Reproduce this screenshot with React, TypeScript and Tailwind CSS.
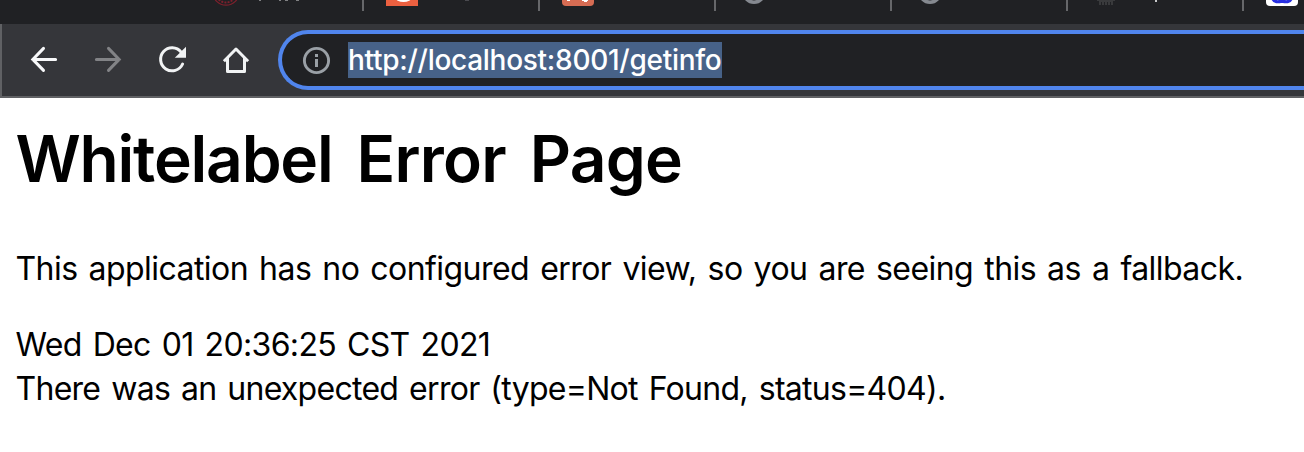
import React from "react";

function Tab({ children }: { children: React.ReactNode }) {
  return (
    <div className="flex h-[11px] w-44 shrink-0 border-r-2 border-[#66676a] pl-[22px]">
      <svg className="h-[11px] w-[110px] shrink-0" viewBox="0 0 110 11">
        {children}
      </svg>
    </div>
  );
}

function Globe() {
  return <circle cx="16" cy="-8" r="10.2" fill="none" stroke="#858990" strokeWidth="3.6" />;
}

function TabStrip() {
  return (
    <div className="flex h-6 overflow-hidden bg-[#202124] pl-[188px]">
      <Tab>
        <g fill="none" stroke="#7d202c">
          <circle cx="16" cy="-8" r="13.2" strokeWidth="1.2" />
          <circle cx="16" cy="-8" r="10.5" strokeWidth="1.8" strokeDasharray="2 1.2" />
        </g>
        <path d="M49 0h2M69 0h2M75 0h3M86 0h3" stroke="#a0a1a3" strokeWidth="1.6" />
      </Tab>
      <Tab>
        <path d="M0 0h32v6H0z" fill="#eb6040" />
        <ellipse cx="17.5" cy="-2.5" rx="8" ry="4.6" fill="#fff" />
        <path d="M79 0h4" stroke="#55565a" strokeWidth="1.6" />
      </Tab>
      <Tab>
        <rect x="0" y="-26" width="32" height="32" rx="4" fill="#d66c53" />
        <path d="M5 0h3v1H5zM20 0h6v1h-1v1h-3V1h-2z" fill="#fff" />
      </Tab>
      <Tab>
        <Globe />
      </Tab>
      <Tab>
        <Globe />
      </Tab>
      <Tab>
        <path d="M7 0h18v1h-2v4h-2V2h-1v3h-2V2h-1v3h-2V2h-1v3h-2V2h-1v3H9V1H7z" fill="#393a3c" />
        <path d="M66 0v2" stroke="#c7c8ca" strokeWidth="2" />
      </Tab>
      <Tab>
        <rect x="0" y="-26" width="32" height="32" rx="4" fill="#fff" />
        <path
          d="M7-1C8 2 12 2.5 16 .7 20 2.5 24 2 25-1"
          fill="none"
          stroke="#272ee0"
          strokeWidth="3.2"
        />
      </Tab>
    </div>
  );
}

function Toolbar() {
  return (
    <div className="flex h-[74px] border-b-2 border-l-2 border-[#606164] bg-[#35363a]">
      <div className="flex shrink-0 gap-8 pt-5 pl-[26px]">
        <svg className="size-8" viewBox="0 0 32 32" fill="none" stroke="#f8f9fa" strokeWidth="3" strokeLinecap="round">
          <path d="M15.5 4.4 4.8 15.4 15.5 26.4M5 15.4h22.6" />
        </svg>
        <svg className="size-8" viewBox="0 0 32 32" fill="none" stroke="#828386" strokeWidth="3" strokeLinecap="round">
          <path d="M16.5 4.4 27.2 15.4 16.5 26.4M27 15.4H4.4" />
        </svg>
        <svg className="size-8" viewBox="0 0 32 32" fill="none">
          <path
            d="M25.1 8.1A11.5 11.5 0 1 0 26.6 20"
            stroke="#f1f3f4"
            strokeWidth="3"
            strokeLinecap="round"
          />
          <path d="M30 2.8v11H18.8z" fill="#f1f3f4" />
        </svg>
        <svg className="size-8" viewBox="0 0 32 32" fill="none" stroke="#f1f3f4" strokeWidth="3">
          <path d="M3.9 17.2 16 5l12.1 12.2M7.5 14v13.5h17V14" strokeLinejoin="round" />
        </svg>
      </div>
      <div className="mt-1.5 ml-[26px] flex h-[60px] grow items-center rounded-l-full border-4 border-r-0 border-[#5085ed] bg-[#202124] pl-5">
        <svg className="size-8 shrink-0" viewBox="0 0 32 32">
          <circle cx="14.5" cy="16.5" r="12.1" fill="none" stroke="#9aa0a6" strokeWidth="2.9" />
          <path d="M13 10h3v3h-3zM13 15h3v8h-3z" fill="#9aa0a6" />
        </svg>
        <span className="ml-[14px] h-9 w-[374px] bg-[#476288] font-['Inter',sans-serif] text-[28px] leading-[36px] font-[450] tracking-[-0.28px] whitespace-nowrap text-white">
          http://localhost:8001/getinfo
        </span>
      </div>
    </div>
  );
}

export default function App() {
  return (
    <div className="h-[452px] w-[1304px] overflow-hidden bg-white">
      <TabStrip />
      <Toolbar />
      <main className="px-[15.5px] font-['Inter',sans-serif] text-[32px] leading-[44px] tracking-[-0.55px] whitespace-nowrap text-black [word-spacing:2.6px]">
        <h1 className="pt-[17px] text-[64px] leading-[88px] font-semibold tracking-[-0.75px] [word-spacing:8.5px]">
          <span className="tracking-[-1.2px]">Whitelabel</span> Error Page
        </h1>
        <p className="mt-11">
          This application has no configured error view, so you are seeing this as a fallback.
        </p>
        <div className="mt-8 tracking-[-0.65px]">Wed Dec 01 20:36:25 CST 2021</div>
        <div className="tracking-[-0.72px]">
          There was an unexpected error (type=Not Found, status=404).
        </div>
      </main>
    </div>
  );
}
